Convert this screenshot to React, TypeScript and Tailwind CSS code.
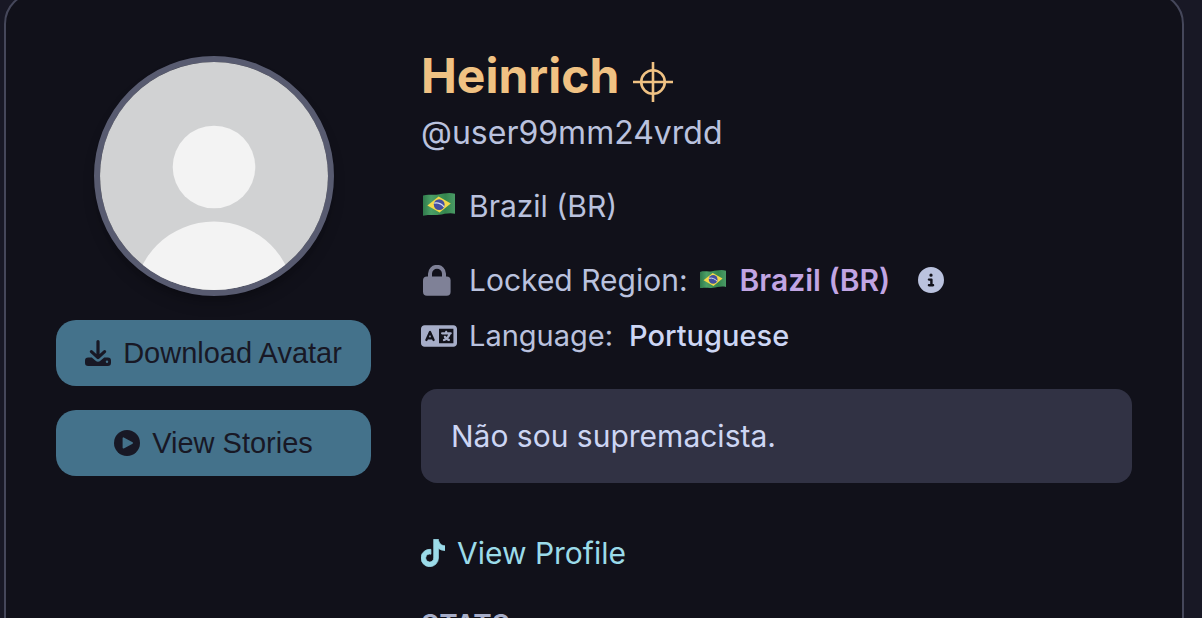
import React from "react";
import { FaCircleInfo, FaLanguage, FaTiktok } from "react-icons/fa6";

interface FlagProps {
    className?: string;
}

const BrazilFlag: React.FC<FlagProps> = ({ className }) => (
    <svg viewBox="0 0 32 23" className={className} role="img" aria-label="Flag of Brazil">
        <defs>
            <linearGradient id="flag-cloth" x1="0" x2="1" y1="0" y2="0">
                <stop offset="0" stopColor="#2f7a4b" />
                <stop offset="0.25" stopColor="#4b9f66" />
                <stop offset="0.7" stopColor="#35864e" />
                <stop offset="1" stopColor="#4a9b66" />
            </linearGradient>
        </defs>
        <path
            d="M0 2.4C5 .8 10 2.4 15 1.600S26-.8 32 .8V20.800c-5-1.600-11 .2-16 1S5 21 0 22.800Z"
            fill="url(#flag-cloth)"
        />
        <path d="M4.400 12.600 15.600 3.600 27.800 10.400 16.600 19.600Z" fill="#f3d84a" />
        <circle cx="16.2" cy="11.6" r="5.4" fill="#4450a0" />
        <path d="M11.2 10.2c3.800-.8 7.200.6 9.800 3.600" stroke="#d5dcef" strokeWidth="1.2" fill="none" />
    </svg>
);

const Crosshair = () => (
    <svg viewBox="0 0 40 40" className="mt-3 size-10" fill="none" stroke="currentColor" strokeWidth="2.6">
        <circle cx="20" cy="20" r="11.8" />
        <path d="M20 0v40M0 20h40" />
    </svg>
);

const LockIcon = () => (
    <svg viewBox="0 0 28 31" className="ml-0.5 h-[31px] w-7 text-[#7f8197]" fill="none">
        <path d="M7 13V8.800a7 7 0 0 1 14 0V13" stroke="currentColor" strokeWidth="4" />
        <rect y="11.600" width="27.600" height="19.200" rx="4" fill="currentColor" />
    </svg>
);

const DownloadIcon = () => (
    <svg viewBox="0 0 26 26" className="size-[26px]" fill="none">
        <path
            d="M3.200 17.600h3.600l3.800 3.200c1.400 1.200 3.400 1.200 4.800 0l3.800-3.200h3.600A3.200 3.200 0 0 1 26 20.800v2a3.200 3.200 0 0 1-3.200 3.200H3.200A3.200 3.200 0 0 1 0 22.800v-2a3.200 3.200 0 0 1 3.200-3.200Z"
            fill="currentColor"
        />
        <path
            d="M13 1.600v15.600M6.400 11.600l6.600 6 6.600-6"
            stroke="currentColor"
            strokeWidth="3.2"
            strokeLinecap="round"
            strokeLinejoin="round"
        />
        <circle cx="22" cy="21.800" r="1.200" fill="#44728b" />
    </svg>
);

const PlayIcon = () => (
    <svg viewBox="0 0 26 26" className="size-[26px]">
        <circle cx="13" cy="13" r="13" fill="currentColor" />
        <path
            d="M9.400 8.200v9.600l8.800-4.800Z"
            fill="#44728b"
            stroke="#44728b"
            strokeWidth="1.600"
            strokeLinejoin="round"
        />
    </svg>
);

const Avatar = () => (
    <div className="size-60 overflow-hidden rounded-full border-6 border-[#585b70] shadow-lg shadow-black/20">
        <svg viewBox="0 0 228 228" className="size-full" role="img" aria-label="Avatar">
            <rect width="228" height="228" fill="#d1d2d3" />
            <circle cx="114" cy="105" r="41.3" fill="#f3f3f3" />
            <circle cx="114" cy="240" r="80.5" fill="#f3f3f3" />
        </svg>
    </div>
);

interface ActionButtonProps {
    icon: React.ReactNode;
    label: string;
}

const ActionButton: React.FC<ActionButtonProps> = ({ icon, label }) => (
    <button
        type="button"
        className="flex h-[66px] w-full items-center justify-center gap-3 rounded-[20px] bg-[#44728b] font-['Liberation_Sans',Arial,sans-serif] text-[29px] text-[#181825]"
    >
        {icon}
        {label}
    </button>
);

const App = () => {
    return (
        <div className="min-h-screen bg-[#181825] pr-[18px] pl-1 font-[Inter,sans-serif] text-[30px] leading-10 text-[#bac2de]">
            <main className="-mt-2 flex min-h-[calc(100vh+40px)] gap-[50px] rounded-4xl border-2 border-[#45475a] bg-[#11111a] px-[50px] pt-[62px]">
                {/* Avatar and actions */}
                <aside className="flex w-[315px] shrink-0 flex-col items-center gap-6">
                    <Avatar />
                    <ActionButton icon={<DownloadIcon />} label="Download Avatar" />
                    <ActionButton icon={<PlayIcon />} label="View Stories" />
                </aside>

                {/* Profile details */}
                <section className="min-w-0 flex-1">
                    <h1 className="flex h-10 items-center gap-[14px] text-5xl font-bold text-[#f0c283]">
                        Heinrich
                        <Crosshair />
                    </h1>
                    <p className="mt-[17px] text-[32px]">@user99mm24vrdd</p>

                    <div className="mt-[33px] flex items-center">
                        <BrazilFlag className="mb-1 ml-0.5 w-8" />
                        <span className="ml-[14px]">Brazil (BR)</span>
                    </div>

                    <div className="mt-[34px] flex items-center">
                        <span className="flex w-12 shrink-0">
                            <LockIcon />
                        </span>
                        <span>Locked Region:</span>
                        <BrazilFlag className="mb-0.5 ml-3 w-[26px]" />
                        <strong className="ml-[14px] font-semibold text-[#c1a5e3]">Brazil (BR)</strong>
                        <button type="button" aria-label="About locked region" className="ml-7">
                            <FaCircleInfo className="size-[26px]" />
                        </button>
                    </div>

                    <div className="mt-4 flex items-center text-[29px]">
                        <span className="flex w-12 shrink-0">
                            <FaLanguage className="size-9 text-[#a6adc8]" />
                        </span>
                        <span>Language:</span>
                        <span className="ml-4 font-medium text-[#cdd6f4]">Portuguese</span>
                    </div>

                    <p className="mt-[33px] rounded-2xl bg-[#313244] px-[30px] py-[27px] text-[#cdd6f4]">
                        Não sou supremacista.
                    </p>

                    <a href="#profile" className="mt-[50px] flex items-center gap-3 text-[#9bdbe9]">
                        <FaTiktok className="h-7 w-6" stroke="currentColor" strokeWidth="14" />
                        View Profile
                    </a>

                    <h2 className="mt-8 text-[28px] font-semibold text-[#a6adc8]">STATS</h2>
                </section>
            </main>
        </div>
    );
};

export default App;
